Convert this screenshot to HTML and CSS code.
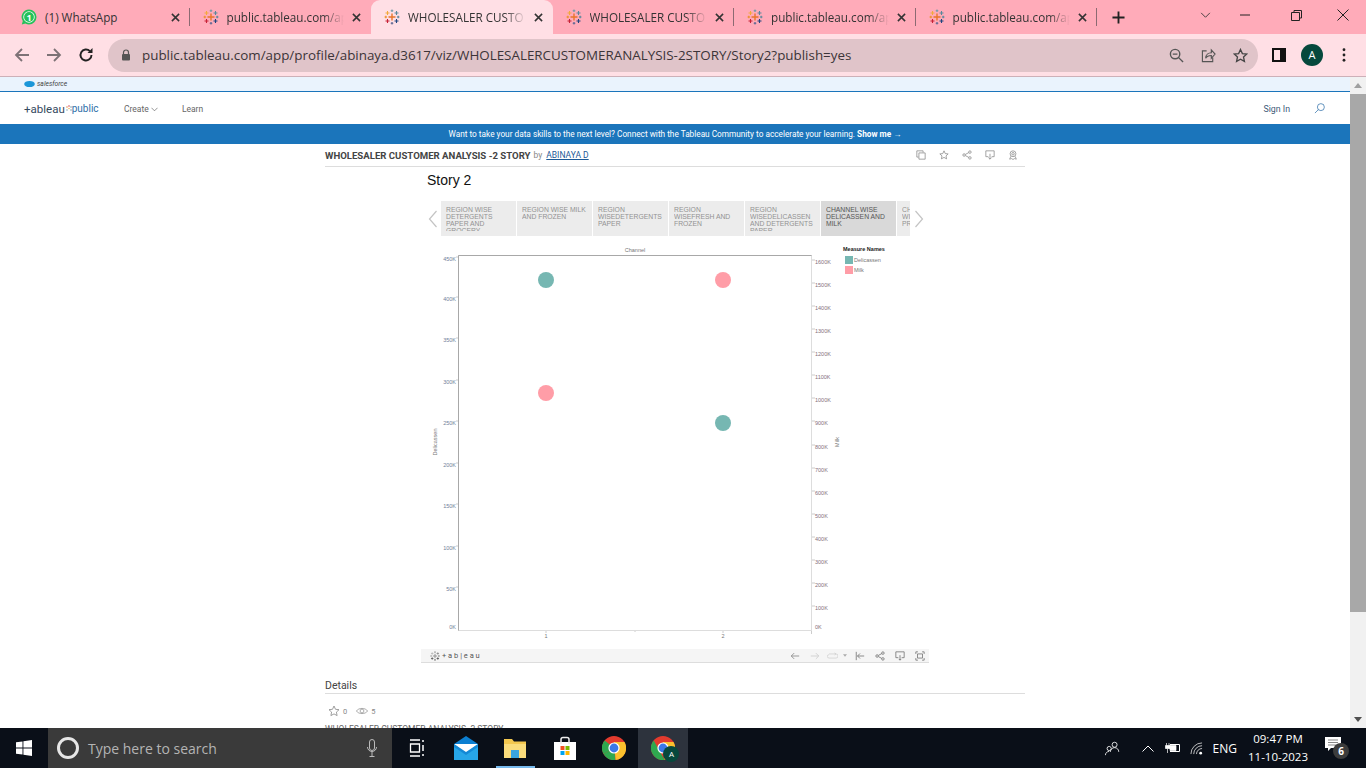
FILE: index.html
```html
<!DOCTYPE html>
<html lang="en">
<head>
  <meta charset="UTF-8" />
  <title>WHOLESALER CUSTOMER ANALYSIS -2 STORY</title>
  <link rel="stylesheet" href="styles.css">
</head>
<body>
  <svg class="defs" width="0" height="0">
    <symbol id="tab-logo" viewBox="0 0 16 16">
      <g fill="none" stroke-width="1.1">
        <path d="M8 4.5v7M4.5 8h7" stroke="#e8762b" stroke-width="1.4"/>
        <path d="M3.5 2v4M1.5 4h4" stroke="#f2a93b"/>
        <path d="M12.5 2v4M10.5 4h4" stroke="#59879b"/>
        <path d="M3.5 10v4M1.5 12h4" stroke="#c72035"/>
        <path d="M12.5 10v4M10.5 12h4" stroke="#1f447e"/>
        <path d="M8 .5v2.6M6.7 1.8h2.6" stroke="#7199a6"/>
        <path d="M8 12.9v2.6M6.7 14.2h2.6" stroke="#5b6591"/>
        <path d="M1.8 6.7v2.6M.5 8h2.6" stroke="#eb912b"/>
        <path d="M14.2 6.7v2.6M12.9 8h2.6" stroke="#5b879b"/>
      </g>
    </symbol>
    <symbol id="x" viewBox="0 0 10 10">
      <path d="M1 1l8 8M9 1l-8 8" stroke="#333" stroke-width="1.7" fill="none"/>
    </symbol>
  </svg>

  <!-- Tabs -->
  <div class="tabstrip">
    <div class="tab sep">
      <svg class="tab-icon" viewBox="0 0 16 16"><path d="M8 .5a7.500 7.500 0 0 1 0 15 7.500 7.500 0 0 1-3.600-.9L.8 15.500l1-3.500A7.500 7.500 0 0 1 8 .5z" fill="#25c15a"/><circle cx="8" cy="8" r="5.700" fill="#fff"/><circle cx="8" cy="8" r="4.900" fill="#25c15a"/></svg>
      <span class="wa-num">1</span>
      <span class="tab-title">(1) WhatsApp</span>
      <svg class="tab-x"><use href="#x"/></svg>
    </div>
    <div class="tab">
      <svg class="tab-icon"><use href="#tab-logo"/></svg>
      <span class="tab-title fade">public.tableau.com/ap</span>
      <svg class="tab-x"><use href="#x"/></svg>
    </div>
    <div class="tab active">
      <svg class="tab-icon"><use href="#tab-logo"/></svg>
      <span class="tab-title fade">WHOLESALER CUSTO</span>
      <svg class="tab-x"><use href="#x"/></svg>
    </div>
    <div class="tab sep">
      <svg class="tab-icon"><use href="#tab-logo"/></svg>
      <span class="tab-title fade">WHOLESALER CUSTO</span>
      <svg class="tab-x"><use href="#x"/></svg>
    </div>
    <div class="tab sep">
      <svg class="tab-icon"><use href="#tab-logo"/></svg>
      <span class="tab-title fade">public.tableau.com/ap</span>
      <svg class="tab-x"><use href="#x"/></svg>
    </div>
    <div class="tab sep">
      <svg class="tab-icon"><use href="#tab-logo"/></svg>
      <span class="tab-title fade">public.tableau.com/ap</span>
      <svg class="tab-x"><use href="#x"/></svg>
    </div>
    <svg class="new-tab" viewBox="0 0 14 14"><path d="M7 .5v13M.5 7h13" stroke="#222" stroke-width="2"/></svg>
    <div class="win-controls">
      <svg class="win-chevron" viewBox="0 0 12 8"><path d="M1 1l5 5 5-5" fill="none" stroke="#333" stroke-width="1"/></svg>
      <svg class="win-min" viewBox="0 0 10 2"><path d="M0 1h10" stroke="#222"/></svg>
      <svg class="win-max" viewBox="0 0 11 11"><path d="M3 2.500V.5h7.500v7.500H8.500M.5 2.500h8v8h-8z" fill="none" stroke="#222"/></svg>
      <svg class="win-close" viewBox="0 0 12 12"><path d="M.5.5l11 11M11.500.5l-11 11" stroke="#222"/></svg>
    </div>
  </div>

  <!-- Address bar -->
  <div class="toolbar">
    <svg class="tb-btn" viewBox="0 0 16 16"><path d="M15 8H2M8 2L2 8l6 6" fill="none" stroke="#7d7276" stroke-width="1.8"/></svg>
    <svg class="tb-btn" viewBox="0 0 16 16"><path d="M1 8h13M8 2l6 6-6 6" fill="none" stroke="#7d7276" stroke-width="1.8"/></svg>
    <svg class="tb-btn" viewBox="0 0 16 16"><path d="M13.500 8a5.500 5.500 0 1 1-1.600-3.900" fill="none" stroke="#222" stroke-width="1.900"/><path d="M14.500 1v5h-5z" fill="#222"/></svg>
    <div class="omnibox">
      <svg class="lock" viewBox="0 0 10 12"><path d="M2.500 5V3.500a2.500 2.500 0 0 1 5 0V5" fill="none" stroke="#555" stroke-width="1.200"/><rect x="1" y="5" width="8" height="6.500" rx="1" fill="#555"/></svg>
      <span class="url">public.tableau.com/app/profile/abinaya.d3617/viz/WHOLESALERCUSTOMERANALYSIS-2STORY/Story2?publish=yes</span>
      <svg class="omni-icon" viewBox="0 0 16 16"><circle cx="6.500" cy="6.500" r="5" fill="none" stroke="#555" stroke-width="1.500"/><path d="M10 10l5 5M4 6.500h5" stroke="#555" stroke-width="1.500"/></svg>
      <svg class="omni-icon" viewBox="0 0 16 16"><path d="M6 3H1.500v11.500h11V10" fill="none" stroke="#555" stroke-width="1.200"/><path d="M5 11c0-4 3-6 6-6V2l4 4.500L11 11V8c-3 0-5 1-6 3z" fill="none" stroke="#555" stroke-width="1.200"/></svg>
      <svg class="omni-icon" viewBox="0 0 16 16"><path d="M8 1.500l2 4.400 4.700.5-3.500 3.200 1 4.700L8 12l-4.200 2.300 1-4.700L1.300 6.400 6 5.900z" fill="none" stroke="#444" stroke-width="1.400"/></svg>
    </div>
    <svg class="side-panel" viewBox="0 0 14 14"><path d="M1 1h12v12H1z" fill="none" stroke="#111" stroke-width="2"/><path d="M8 1h5v12H8z" fill="#111"/></svg>
    <div class="avatar">A</div>
    <svg class="menu-dots" viewBox="0 0 4 16"><circle cx="2" cy="2" r="1.600"/><circle cx="2" cy="8" r="1.600"/><circle cx="2" cy="14" r="1.600"/></svg>
  </div>

  <div class="window">
    <div class="page">
      <div class="sf-bar">
        <svg class="sf-cloud" viewBox="0 0 12 8"><ellipse cx="6" cy="4" rx="5.800" ry="3.400" fill="#1b96d8"/></svg>
        <span>salesforce</span>
      </div>

      <nav class="site-nav">
        <div class="site-logo">
          <span>+ableau</span>
          <svg class="logo-dots" viewBox="0 0 6 8"><circle cx="1" cy="2" r=".7" fill="#e8762b"/><circle cx="3" cy="1" r=".7" fill="#c72035"/><circle cx="5" cy="2" r=".7" fill="#59879b"/><circle cx="3" cy="3.500" r=".7" fill="#f2a93b"/><circle cx="5" cy="5" r=".7" fill="#59879b"/><circle cx="1" cy="5" r=".7" fill="#7199a6"/></svg>
          <span class="logo-public">public</span>
        </div>
        <a class="nav-link nav-create">Create <svg class="nav-caret" viewBox="0 0 8 5"><path d="M.5.500L4 4 7.500.5" fill="none" stroke="#666" stroke-width=".8"/></svg></a>
        <a class="nav-link">Learn</a>
        <a class="sign-in">Sign In</a>
        <svg class="nav-search" viewBox="0 0 12 12"><circle cx="7.500" cy="4.500" r="3.800" fill="none" stroke="#2f6fa8" stroke-width=".8"/><path d="M4.800 7.200L1 11" stroke="#2f6fa8" stroke-width=".8"/></svg>
      </nav>

      <div class="banner">Want to take your data skills to the next level? Connect with the Tableau Community to accelerate your learning. <b>Show me →</b></div>

      <main class="content">
        <div class="viz-title">
          <h1>WHOLESALER CUSTOMER ANALYSIS -2 STORY</h1>
          <span class="by">by</span>
          <a class="author">ABINAYA D</a>
          <div class="viz-actions">
            <svg viewBox="0 0 12 12"><path d="M3 8.500H1V1h7.500v2M3.500 3.500H11V11H3.500z" fill="none" stroke="#888" stroke-width=".9"/></svg>
            <svg viewBox="0 0 12 12"><path d="M6 1l1.500 3.300 3.500.4-2.600 2.400.7 3.500L6 8.900l-3.100 1.700.7-3.500L1 4.700l3.500-.4z" fill="none" stroke="#888" stroke-width=".9"/></svg>
            <svg viewBox="0 0 12 12"><g fill="none" stroke="#888" stroke-width=".9"><circle cx="2.500" cy="6" r="1.500"/><circle cx="9.500" cy="2.500" r="1.500"/><circle cx="9.500" cy="9.500" r="1.500"/><path d="M4 5.300l4.200-2.200M4 6.700l4.200 2.200"/></g></svg>
            <svg viewBox="0 0 12 12"><path d="M4 8H1V1h10v7H8M6 4.500V11M4 9l2 2 2-2" fill="none" stroke="#888" stroke-width=".9"/></svg>
            <svg viewBox="0 0 12 12"><g fill="none" stroke="#888" stroke-width=".9"><circle cx="6" cy="4.500" r="3.500"/><circle cx="6" cy="4.500" r="1.500"/><path d="M3.500 7.500L2 11l2.500-.7L6 11.500l1.500-1.200 2.500.7-1.500-3.500"/></g></svg>
          </div>
        </div>

        <section class="story">
          <div class="story-name">Story 2</div>
          <div class="story-nav">
            <svg class="story-arrow" viewBox="0 0 10 18"><path d="M8.500 1L1.500 9l7 8" fill="none" stroke="#c4c4c4" stroke-width="1.200"/></svg>
            <div class="story-points">
              <div class="point"><div class="point-text">REGION WISE DETERGENTS PAPER AND GROCERY</div></div>
              <div class="point"><div class="point-text">REGION WISE MILK AND FROZEN</div></div>
              <div class="point"><div class="point-text">REGION WISEDETERGENTS PAPER</div></div>
              <div class="point"><div class="point-text">REGION WISEFRESH AND FROZEN</div></div>
              <div class="point"><div class="point-text">REGION WISEDELICASSEN AND DETERGENTS PAPER</div></div>
              <div class="point current"><div class="point-text">CHANNEL WISE DELICASSEN AND MILK</div></div>
              <div class="point clipped"><div class="point-text">CH<br>WI<br>PR</div></div>
            </div>
            <svg class="story-arrow" viewBox="0 0 10 18"><path d="M1.500 1l7 8-7 8" fill="none" stroke="#c4c4c4" stroke-width="1.200"/></svg>
          </div>

          <!-- origin of the chart is x 421, y 244 on screen -->
          <svg class="chart" width="508" height="405" viewBox="0 0 508 405">
            <rect x="37.500" y="11.500" width="353" height="375" fill="#fff" stroke="#ddd"/>
            <path d="M37.500 11.500V386.500M37.500 11.500H390.500" stroke="#a8a8a8" fill="none"/>
            <path d="M214 387v1M125 387v2M302 387v2M390.500 387v3" stroke="#ccc"/>
            <path d="M391 16h3M391 39h3M391 62h3M391 85h3M391 108h3M391 131h3M391 154h3M391 177h3M391 201h3M391 224h3M391 247h3M391 270h3M391 293h3M391 316h3M391 339h3M391 362h3M35 13h2M35 53h2M35 94h2M35 136h2M35 177h2M35 219h2M35 260h2M35 302h2M35 343h2" stroke="#ccc"/>
            <g class="ax ax-left" text-anchor="end">
              <text x="35" y="17">450K</text><text x="35" y="57">400K</text><text x="35" y="98">350K</text>
              <text x="35" y="140">300K</text><text x="35" y="181">250K</text><text x="35" y="223">200K</text>
              <text x="35" y="264">150K</text><text x="35" y="306">100K</text><text x="35" y="347">50K</text>
              <text x="35" y="385">0K</text>
            </g>
            <g class="ax ax-right">
              <text x="394" y="20">1600K</text><text x="394" y="43">1500K</text><text x="394" y="66">1400K</text>
              <text x="394" y="89">1300K</text><text x="394" y="112">1200K</text><text x="394" y="135">1100K</text>
              <text x="394" y="158">1000K</text><text x="394" y="181">900K</text><text x="394" y="205">800K</text>
              <text x="394" y="228">700K</text><text x="394" y="251">600K</text><text x="394" y="274">500K</text>
              <text x="394" y="297">400K</text><text x="394" y="320">300K</text><text x="394" y="343">200K</text>
              <text x="394" y="366">100K</text><text x="394" y="385">0K</text>
            </g>
            <g class="ax" text-anchor="middle">
              <text x="125" y="394">1</text><text x="302" y="394">2</text>
              <text x="214" y="8">Channel</text>
              <text transform="translate(16 198) rotate(-90)">Delicassen</text>
              <text transform="translate(418 198) rotate(-90)">Milk</text>
            </g>
            <circle cx="125" cy="36" r="8" fill="#76b7b2"/>
            <circle cx="302" cy="36" r="8" fill="#ff9da7"/>
            <circle cx="125" cy="149" r="8" fill="#ff9da7"/>
            <circle cx="302" cy="179" r="8" fill="#76b7b2"/>
            <text class="legend-title" x="422" y="7">Measure Names</text>
            <rect x="424" y="12" width="8" height="8" fill="#76b7b2"/>
            <text class="ax" x="433" y="18">Delicassen</text>
            <rect x="424" y="22" width="8" height="8" fill="#ff9da7"/>
            <text class="ax" x="433" y="28">Milk</text>
          </svg>

          <div class="viz-toolbar">
            <svg class="tab-mark" viewBox="0 0 16 16"><use href="#tab-logo"/></svg>
            <span class="viz-brand">+ a b | e a u</span>
            <div class="viz-tools">
              <svg viewBox="0 0 12 12"><path d="M11 6H1.500M5 2.500L1.500 6 5 9.500" fill="none" stroke="#888"/></svg>
              <svg viewBox="0 0 12 12"><path d="M1 6h9.500M7 2.500L10.500 6 7 9.500" fill="none" stroke="#ccc"/></svg>
              <svg class="tool-wide" viewBox="0 0 16 10"><path d="M3 2h10a2.500 2.500 0 0 1 0 6H3a2.500 2.500 0 0 1 0-5M11 .5L13 2l-2 1.500" fill="none" stroke="#ccc"/></svg>
              <svg class="tool-caret" viewBox="0 0 6 4"><path d="M0 0h6L3 4z" fill="#aaa"/></svg>
              <svg viewBox="0 0 12 12"><path d="M1.500 1v10M11 6H3M6 3L3 6l3 3" fill="none" stroke="#777"/></svg>
              <svg viewBox="0 0 12 12"><g fill="none" stroke="#777"><circle cx="2.500" cy="6" r="1.500"/><circle cx="9.500" cy="2.500" r="1.500"/><circle cx="9.500" cy="9.500" r="1.500"/><path d="M4 5.300l4.200-2.200M4 6.700l4.200 2.200"/></g></svg>
              <svg viewBox="0 0 12 12"><path d="M4 8H1V1h10v7H8M6 5v6M4.500 9.500L6 11l1.500-1.500" fill="none" stroke="#777"/></svg>
              <svg viewBox="0 0 12 12"><path d="M1 3.500V1h2.500M8.500 1H11v2.500M11 8.500V11H8.500M3.500 11H1V8.500M3 3.500h6v5H3z" fill="none" stroke="#777"/></svg>
            </div>
          </div>
        </section>

        <h2 class="details-head">Details</h2>
        <div class="stats">
          <svg viewBox="0 0 12 12"><path d="M6 1l1.500 3.300 3.500.4-2.600 2.400.7 3.500L6 8.900l-3.100 1.700.7-3.500L1 4.700l3.500-.4z" fill="none" stroke="#888" stroke-width=".8"/></svg>
          <span>0</span>
          <svg class="eye" viewBox="0 0 14 10"><path d="M.5 5C3 1 11 1 13.500 5 11 9 3 9 .5 5z" fill="none" stroke="#888" stroke-width=".8"/><circle cx="7" cy="5" r="2.200" fill="none" stroke="#888" stroke-width=".8"/></svg>
          <span>5</span>
        </div>
        <p class="desc">WHOLESALER CUSTOMER ANALYSIS -2 STORY</p>
      </main>
    </div>

    <div class="scrollbar">
      <svg class="scroll-arrow" viewBox="0 0 8 5"><path d="M4 0l4 5H0z" fill="#a0a0a0"/></svg>
      <div class="scroll-thumb"></div>
      <svg class="scroll-arrow" viewBox="0 0 8 5"><path d="M0 0h8L4 5z" fill="#505050"/></svg>
    </div>
  </div>

  <!-- Windows taskbar -->
  <footer class="taskbar">
    <svg class="start" viewBox="0 0 16 16"><path d="M0 2.300l6.500-.9v6.200H0zM7.400 1.300L16 0v7.600H7.400zM0 8.400h6.500v6.200L0 13.700zM7.400 8.400H16V16l-8.600-1.200z" fill="#fff"/></svg>
    <div class="search-box">
      <span class="cortana"></span>
      <span class="search-text">Type here to search</span>
      <svg class="mic" viewBox="0 0 10 18"><rect x="2.500" y=".5" width="5" height="11" rx="2.500" fill="none" stroke="#bbb"/><path d="M.5 8a4.500 4.500 0 0 0 9 0M5 12.500v4.500M2.500 17.500h5" fill="none" stroke="#bbb"/></svg>
    </div>
    <div class="apps">
      <div class="app"><svg class="ic-task" viewBox="0 0 16 18"><path d="M1 1h10M1 17h10M1.500 5h9v8h-9z" fill="none" stroke="#fff" stroke-width="1.300"/><path d="M14 1v2M14 6v6M14 15v2" stroke="#fff" stroke-width="1.500"/></svg></div>
      <div class="app"><svg class="ic-app" viewBox="0 0 24 24"><path d="M0 8L12 0l12 8v16H0z" fill="#0c7fd1"/><path d="M0 8h24v16H0z" fill="#27a6e8"/><path d="M0 8l12 9 12-9H0z" fill="#fff"/><path d="M0 8l12 8 12-8v3l-12 8L0 11z" fill="#1389d6"/></svg></div>
      <div class="app running"><svg class="ic-app" viewBox="0 0 24 24"><path d="M1 3h8l2 2.500h12V22H1z" fill="#f4c84f"/><path d="M1 8h22v14H1z" fill="#fbdd7c"/><path d="M8 14h8v8H8z" fill="#3aa5e0"/></svg></div>
      <div class="app"><svg class="ic-app" viewBox="0 0 24 24"><path d="M1 6h22v18H1z" fill="#fff"/><path d="M8 8V3.500a2 2 0 0 1 2-2h4a2 2 0 0 1 2 2V8" fill="none" stroke="#eee" stroke-width="1.500"/><path d="M7.500 10h4v4h-4z" fill="#f25022"/><path d="M12.500 10h4v4h-4z" fill="#7fba00"/><path d="M7.500 15h4v4h-4z" fill="#00a4ef"/><path d="M12.500 15h4v4h-4z" fill="#ffb900"/></svg></div>
      <div class="app"><svg class="ic-app" viewBox="0 0 24 24"><circle cx="12" cy="12" r="12" fill="#e33b2e"/><path d="M12 12L1.600 18a12 12 0 0 0 12 6z" fill="#2fa84f"/><path d="M12 6h10.500A12 12 0 0 1 13.600 24z" fill="#fbc02d"/><path d="M12 12L1.600 18A12 12 0 0 1 2.700 4.400z" fill="#2fa84f"/><circle cx="12" cy="12" r="5.600" fill="#fff"/><circle cx="12" cy="12" r="4.400" fill="#3b78e7"/></svg></div>
      <div class="app active-app">
        <svg class="ic-app" viewBox="0 0 24 24"><circle cx="12" cy="12" r="12" fill="#e33b2e"/><path d="M12 6h10.500A12 12 0 0 1 13.600 24z" fill="#fbc02d"/><path d="M12 12L1.600 18A12 12 0 0 1 2.700 4.400L13.600 24A12 12 0 0 1 1.600 18z" fill="#2fa84f"/><circle cx="12" cy="12" r="5.600" fill="#fff"/><circle cx="12" cy="12" r="4.400" fill="#3b78e7"/></svg>
        <span class="app-badge">A</span>
      </div>
    </div>
    <div class="tray">
      <svg class="ic-people" viewBox="0 0 18 18"><g fill="none" stroke="#fff"><circle cx="11.500" cy="4.500" r="3"/><path d="M6.500 13c0-3 2.200-5 5-5s5 2 5 5"/><circle cx="5" cy="9" r="2.500"/><path d="M.5 17c0-2.500 2-4.500 4.500-4.500"/></g></svg>
      <svg class="ic-chev" viewBox="0 0 12 7"><path d="M.5 6.500L6 1l5.500 5.500" fill="none" stroke="#fff"/></svg>
      <svg class="ic-batt" viewBox="0 0 16 10"><path d="M5 1.500h9.500v7H5" fill="none" stroke="#fff"/><path d="M5 2.500h6v5H5zM1.500 0v2.500M4 0v2.500M.5 2.500h4.500v3H.5zM2.500 5.500V10" fill="#fff" stroke="#fff" stroke-width=".7"/></svg>
      <svg class="ic-wifi" viewBox="0 0 14 14"><g fill="none" stroke="#ddd" stroke-width=".9"><path d="M1 13A12 12 0 0 1 13 1"/><path d="M4 13A9 9 0 0 1 13 4"/><path d="M7 13a6 6 0 0 1 6-6"/></g><circle cx="11.500" cy="12" r="1.500" fill="#fff"/></svg>
      <span class="lang">ENG</span>
      <div class="clock"><span>09:47 PM</span><span>11-10-2023</span></div>
      <div class="notif">
        <svg viewBox="0 0 16 15"><path d="M0 0h16v11H6l-3 3v-3H0z" fill="#fff"/><path d="M3 3h10M3 5.500h10M3 8h10" stroke="#555" stroke-width=".7"/></svg>
        <span class="notif-count">6</span>
      </div>
    </div>
  </footer>
</body>
</html>
```

FILE: styles.css
```css
* { box-sizing: border-box; }

html, body { height: 100%; }

body {
  margin: 0;
  height: 768px;
  overflow: hidden;
  display: flex;
  flex-direction: column;
  background: #fff;
  font-family: "Roboto", sans-serif;
}

.defs { position: absolute; }

/* tabs */
.tabstrip {
  height: 34px;
  flex: none;
  display: flex;
  align-items: center;
  padding-left: 8px;
  background: #ffabb9;
  font-family: "Open Sans", sans-serif;
}
.tab {
  width: 181.500px;
  height: 34px;
  flex: none;
  position: relative;
  display: flex;
  align-items: center;
  padding: 0 10px 0 13px;
  font-size: 11.700px;
  color: #333;
}
.tab.sep::after {
  content: "";
  position: absolute;
  right: 0;
  top: 8px;
  height: 18px;
  width: 1px;
  background: #8c6a72;
}
.tab.active {
  background: #ffdfe5;
  border-radius: 9px 9px 0 0;
}
.tab-icon {
  width: 16px;
  height: 16px;
  flex: none;
  margin-right: 8px;
}
.wa-num {
  position: absolute;
  left: 13px;
  width: 16px;
  text-align: center;
  font-size: 9px;
  font-weight: 700;
  color: #fff;
}
.tab-title {
  flex: 1;
  min-width: 0;
  white-space: nowrap;
}
.tab-title.fade {
  -webkit-mask-image: linear-gradient(to right, #000 82%, transparent 100%);
  mask-image: linear-gradient(to right, #000 82%, transparent 100%);
}
.tab-x {
  width: 9px;
  height: 9px;
  flex: none;
  margin-left: 8px;
}
.new-tab {
  width: 13px;
  height: 13px;
  flex: none;
  margin-left: 15px;
}
.win-controls {
  margin-left: auto;
  display: flex;
  align-items: center;
  height: 100%;
  padding-bottom: 4px;
}
.win-chevron { width: 11px; height: 7px; margin-right: 29px; }
.win-min { width: 10px; height: 2px; margin-right: 41px; }
.win-max { width: 11px; height: 11px; margin-right: 35px; }
.win-close { width: 12px; height: 12px; margin-right: 17px; }

/* address bar */
.toolbar {
  height: 43px;
  flex: none;
  display: flex;
  align-items: center;
  padding-left: 14px;
  background: #ffdfe5;
  border-bottom: 1px solid #cdb0b8;
}
.tb-btn {
  width: 16px;
  height: 16px;
  flex: none;
  margin-right: 16px;
}
.omnibox {
  width: 1150px;
  height: 33px;
  flex: none;
  margin-left: -2px;
  display: flex;
  align-items: center;
  padding: 0 10px 0 13px;
  background: #e0c4c9;
  border-radius: 17px;
}
.lock { width: 10px; height: 12px; flex: none; }
.url {
  flex: 1;
  margin-left: 11px;
  font-family: "Open Sans", sans-serif;
  font-size: 13.400px;
  color: #3c3438;
  white-space: nowrap;
}
.omni-icon { width: 15px; height: 15px; flex: none; margin-left: 17px; }
.side-panel { width: 14px; height: 14px; flex: none; margin-left: 14px; }
.avatar {
  width: 22px;
  height: 22px;
  flex: none;
  margin-left: 15px;
  border-radius: 50%;
  background: #06483c;
  color: #fff;
  font: 11px/22px "Open Sans", sans-serif;
  text-align: center;
}
.menu-dots { width: 4px; height: 14px; flex: none; margin-left: 19px; fill: #222; }

/* page + scrollbar */
.window {
  flex: 1;
  min-height: 0;
  display: flex;
}
.page {
  flex: 1;
  min-width: 0;
  overflow: hidden;
}
.scrollbar {
  width: 16px;
  flex: none;
  display: flex;
  flex-direction: column;
  align-items: center;
  background: #f1f1f1;
}
.scroll-arrow { width: 8px; height: 5px; flex: none; margin: 6px 0; }
.scroll-thumb { width: 16px; height: 518px; background: #a8a8a8; }
.scrollbar .scroll-arrow:last-child { margin-top: auto; }

.sf-bar {
  height: 15px;
  display: flex;
  align-items: center;
  padding-left: 24px;
  background: #eaf3fd;
  border-bottom: 1px solid #1b75bb;
  font-size: 6.700px;
  font-style: italic;
  color: #444;
}
.sf-cloud { width: 11px; height: 8px; margin-right: 2px; }

.site-nav {
  height: 32px;
  display: flex;
  align-items: center;
  padding: 1px 0 0 24px;
  background: #fff;
}
.site-logo {
  width: 100px;
  display: flex;
  align-items: center;
  font-size: 11.500px;
  color: #34495e;
  white-space: nowrap;
}
.logo-dots { width: 6px; height: 8px; margin: 0 0 0 1px; }
.logo-public { font-size: 10px; color: #2f6fa8; }
.nav-link {
  font-size: 8.500px;
  color: #666;
}
.nav-create { margin-right: 24px; }
.nav-caret { width: 7px; height: 5px; }
.sign-in {
  margin-left: auto;
  font-size: 8.800px;
  color: #3d5a78;
}
.nav-search { width: 11px; height: 11px; margin: 0 25px 0 24px; }

.banner {
  height: 20px;
  background: #1b75bb;
  color: #fff;
  font-size: 8.250px;
  line-height: 20px;
  text-align: center;
}

.content {
  width: 700px;
  margin: 0 auto;
}
.viz-title {
  height: 23px;
  display: flex;
  align-items: center;
  border-bottom: 1px solid #ddd;
  font-size: 8.500px;
}
.viz-title h1 {
  margin: 0 3px 0 0;
  font-size: 9.600px;
  font-weight: 700;
  color: #444;
}
.by { color: #888; margin-right: 4px; }
.author {
  color: #1d5a96;
  text-decoration: underline;
}
.viz-actions {
  margin-left: auto;
  display: flex;
  gap: 13px;
  padding-right: 7px;
}
.viz-actions svg { width: 10px; height: 10px; }

.story {
  width: 508px;
  margin: 0 auto;
}
.story-name {
  height: 34px;
  padding: 5px 0 0 6px;
  font: 14px/17px "Liberation Sans", sans-serif;
  color: #111;
}
.story-nav {
  height: 35px;
  display: flex;
  align-items: center;
  margin-bottom: 8px;
}
.story-arrow {
  width: 10px;
  height: 18px;
  flex: none;
}
.story-arrow:first-child { margin: 0 3px 0 7px; }
.story-arrow:last-child { margin-left: 4px; }
.story-points {
  width: 469px;
  flex: none;
  display: flex;
  gap: 1px;
  overflow: hidden;
}
.point {
  width: 75px;
  height: 35px;
  flex: none;
  padding: 5px 4px 0 5px;
  background: #ececec;
  color: #929292;
  font: 6.800px/7px "Liberation Sans", sans-serif;
}
.point-text { max-height: 25px; overflow: hidden; }
.point.current { background: #d9d9d9; color: #555; }

.chart { display: block; }
.chart text { font-family: "Liberation Sans", sans-serif; }
.ax { font-size: 5.500px; fill: #777; }
.ax-left { fill: #70809a; }
.ax-right { fill: #85707c; }
.legend-title { font-size: 5.500px; font-weight: 700; fill: #222; }

.viz-toolbar {
  height: 14px;
  display: flex;
  align-items: center;
  padding-left: 9px;
  background: #f5f5f5;
  border-bottom: 1px solid #ddd;
}
.tab-mark { width: 10px; height: 10px; filter: grayscale(1); }
.viz-brand { margin-left: 2px; font-size: 7.500px; color: #555; }
.viz-tools {
  margin-left: auto;
  display: flex;
  align-items: center;
  gap: 10px;
  padding-right: 4px;
}
.viz-tools svg { width: 10px; height: 10px; }
.viz-tools .tool-wide { width: 11px; height: 8px; margin-left: -3px; }
.viz-tools .tool-caret { width: 4px; height: 3px; margin: 0 -2px 0 -5px; }

.details-head {
  height: 31px;
  margin: 0;
  padding-top: 16px;
  border-bottom: 1px solid #ddd;
  font-size: 10.500px;
  line-height: 13px;
  font-weight: 400;
  color: #444;
}
.stats {
  display: flex;
  align-items: center;
  gap: 3px;
  padding: 11px 0 0 3px;
  font-size: 7.500px;
  color: #888;
}
.stats svg { width: 12px; height: 12px; }
.stats .eye { margin-left: 6px; }
.desc {
  margin: 7px 0 0;
  font-size: 8.500px;
  color: #666;
}

/* taskbar */
.taskbar {
  height: 40px;
  flex: none;
  display: flex;
  align-items: center;
  background: #0a0f18;
}
.start { width: 16px; height: 16px; flex: none; margin: 0 16px; }
.search-box {
  width: 344px;
  height: 40px;
  flex: none;
  display: flex;
  align-items: center;
  padding: 0 15px 0 9px;
  background: #3a3a3a;
}
.cortana {
  width: 22px;
  height: 22px;
  flex: none;
  border: 3px solid #e6e6e6;
  border-radius: 50%;
}
.search-text {
  flex: 1;
  margin-left: 9px;
  font: 14px "Open Sans", sans-serif;
  color: #b4b4b4;
}
.mic { width: 10px; height: 18px; flex: none; }
.apps { display: flex; }
.app {
  width: 49.300px;
  height: 40px;
  position: relative;
  display: flex;
  align-items: center;
  justify-content: center;
}
.app.running::after {
  content: "";
  position: absolute;
  left: 5px;
  right: 5px;
  bottom: 0;
  height: 2px;
  background: #76b9ed;
}
.active-app { background: #2d333d; }
.ic-app { width: 24px; height: 24px; }
.ic-task { width: 16px; height: 18px; }
.app-badge {
  position: absolute;
  left: 25px;
  top: 18px;
  width: 16px;
  height: 16px;
  border-radius: 50%;
  background: #06483c;
  color: #fff;
  font: 8px/16px "Open Sans", sans-serif;
  text-align: center;
}
.tray {
  margin-left: auto;
  display: flex;
  align-items: center;
  color: #fff;
  font-family: "Open Sans", sans-serif;
}
.ic-people { width: 15px; height: 15px; margin-right: 22px; }
.ic-chev { width: 12px; height: 7px; margin-right: 11px; }
.ic-batt { width: 16px; height: 10px; margin-right: 9px; }
.ic-wifi { width: 13px; height: 13px; margin-right: 10px; }
.lang { font-size: 12px; margin-right: 11px; }
.clock {
  width: 60px;
  display: flex;
  flex-direction: column;
  align-items: center;
  font-size: 11.500px;
  line-height: 18px;
  white-space: nowrap;
}
.notif {
  position: relative;
  width: 26px;
  height: 24px;
  margin: 0 15px 0 17px;
}
.notif svg { width: 16px; height: 15px; position: absolute; left: 0; top: 1px; }
.notif-count {
  position: absolute;
  left: 8px;
  top: 7px;
  width: 16px;
  height: 16px;
  border-radius: 50%;
  background: #3c3c3c;
  font-size: 10px;
  font-weight: 700;
  line-height: 16px;
  text-align: center;
}
```
